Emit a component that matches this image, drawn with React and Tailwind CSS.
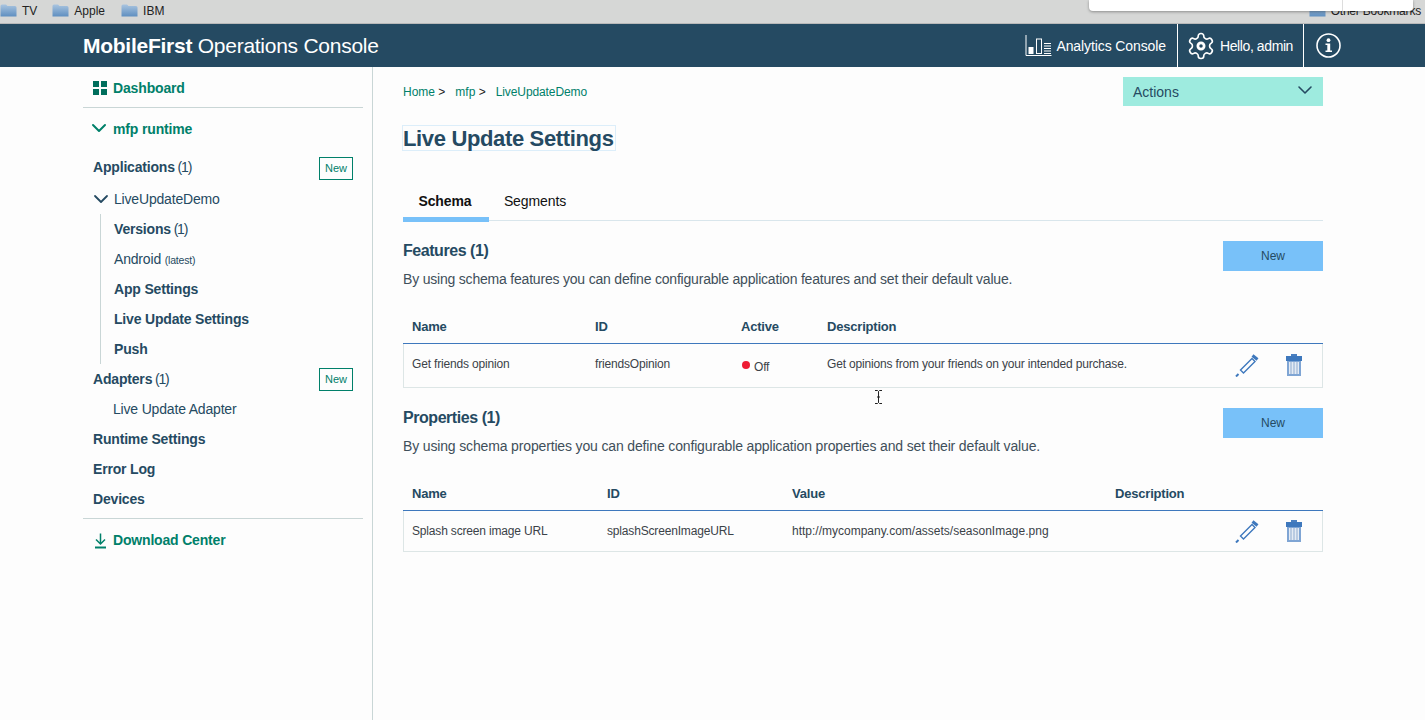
import React from 'react';
import { ChevronDown } from 'lucide-react';

const Folder = () => (
  <svg width="17" height="13" viewBox="0 0 17 13" className="shrink-0">
    <defs>
      <linearGradient id="folderFill" x1="0" y1="0" x2="0" y2="1">
        <stop offset="0" stopColor="#a9c4e0" />
        <stop offset="1" stopColor="#5f8fc0" />
      </linearGradient>
    </defs>
    <path d="M0.5 2 Q0.5 0.5 2 0.5 H6 L7.5 2 H15 Q16.5 2 16.5 3.5 V12.5 H0.5 Z" fill="url(#folderFill)" />
  </svg>
);

const Pencil = () => (
  <svg width="24" height="24" viewBox="0 0 24 24" fill="none" stroke="#3e78bd" strokeWidth="1.4">
    <path d="M5.5 17 L17 5.5 L20 8.5 L8.5 20 Z" />
    <path d="M17.5 2.5 L22.5 6.5" strokeWidth="3" />
    <path d="M1 23.5 L3.5 21" strokeWidth="2" />
  </svg>
);

const Trash = () => (
  <svg width="18" height="23" viewBox="0 0 18 23">
    <rect x="6" y="0" width="6" height="2" fill="#4a7fc0" />
    <rect x="1" y="2" width="16" height="5" fill="#3e78bd" />
    <rect x="2" y="7" width="14" height="15" fill="#7fa5d4" />
    <rect x="4" y="8" width="10" height="12" fill="#e4ebf4" />
    <path d="M6 8 V20 M9 8 V20 M12 8 V20" stroke="#9db6d6" strokeWidth="1.2" />
  </svg>
);

const AnalyticsIcon = () => (
  <svg width="27" height="23" viewBox="0 0 27 23" fill="none" stroke="#fff">
    <path d="M1 1 V21.5 H26.5" />
    <rect x="3.5" y="13" width="5" height="7" fill="#fff" stroke="none" />
    <rect x="11.5" y="5" width="5" height="14.5" />
    <path d="M19 9.5 H26 M19 12 H26 M19 14.5 H26 M19 17 H26 M19 19.5 H26" strokeWidth="1" />
  </svg>
);

const GearIcon = () => (
  <svg width="30" height="30" viewBox="0 0 24 24" fill="none" stroke="#fff" strokeWidth="1.3" strokeLinejoin="round">
    <path d="M12.22 2h-.44a2 2 0 0 0-2 2v.18a2 2 0 0 1-1 1.73l-.43.25a2 2 0 0 1-2 0l-.15-.08a2 2 0 0 0-2.73.73l-.22.38a2 2 0 0 0 .73 2.73l.15.1a2 2 0 0 1 1 1.72v.51a2 2 0 0 1-1 1.74l-.15.09a2 2 0 0 0-.73 2.73l.22.38a2 2 0 0 0 2.73.73l.15-.08a2 2 0 0 1 2 0l.43.25a2 2 0 0 1 1 1.73V20a2 2 0 0 0 2 2h.44a2 2 0 0 0 2-2v-.18a2 2 0 0 1 1-1.73l.43-.25a2 2 0 0 1 2 0l.15.08a2 2 0 0 0 2.73-.73l.22-.39a2 2 0 0 0-.73-2.73l-.15-.08a2 2 0 0 1-1-1.74v-.5a2 2 0 0 1 1-1.74l.15-.09a2 2 0 0 0 .73-2.73l-.22-.38a2 2 0 0 0-2.73-.73l-.15.08a2 2 0 0 1-2 0l-.43-.25a2 2 0 0 1-1-1.73V4a2 2 0 0 0-2-2z" />
    <circle cx="12" cy="12" r="2.5" strokeWidth="2.2" />
  </svg>
);

const InfoIcon = () => (
  <svg width="25" height="25" viewBox="0 0 25 25" fill="none">
    <circle cx="12.5" cy="12.5" r="11.5" stroke="#fff" strokeWidth="1.6" />
    <circle cx="12.5" cy="7.2" r="1.9" fill="#fff" />
    <path d="M9.5 10.5 H14.2 V17.5 H16 V19 H9.5 V17.5 H11.3 V12 H9.5 Z" fill="#fff" />
  </svg>
);

const DownloadIcon = () => (
  <svg width="13" height="16" viewBox="0 0 13 16" fill="none" stroke="#00806a" strokeWidth="1.5">
    <path d="M6.5 0.5 V10.5 M2 6.5 L6.5 11 L11 6.5" />
    <path d="M1 14.5 H12" strokeWidth="2" />
  </svg>
);

const SideNew = () => (
  <span className="w-[34px] h-[23px] border border-[#00806a] text-[#00806a] text-[11px] tracking-normal font-normal flex items-center justify-center">New</span>
);

const Count = () => <span className="tracking-[-1.2px] -ml-[1px]">(1)</span>;

const Row = ({ children, className = '' }) => (
  <div className={`h-[30px] flex items-center text-[14px] tracking-[-0.18px] text-[#254a62] ${className}`}>{children}</div>
);

const SectionHead = ({ title, text, spacing }) => (
  <div className="flex justify-between">
    <div>
      <h3 className="text-[16px] leading-[20px] tracking-[-0.45px] font-bold text-[#254a62]">{title}</h3>
      <p className={`mt-[8px] text-[14px] leading-[20px] text-[#3f4f5a] ${spacing}`}>{text}</p>
    </div>
    <button className="w-[100px] h-[30px] bg-[#78c1f9] text-[12px] text-[#254a62] flex items-center justify-center">New</button>
  </div>
);

const Actions = () => (
  <div className="flex items-center w-[94px] shrink-0 ml-auto">
    <span className="w-[24px] ml-[7px]"><Pencil /></span>
    <span className="ml-[26px] mt-[1px]"><Trash /></span>
  </div>
);

export default function App() {
  return (
    <div className="min-h-[720px] bg-[#fdfdfd] font-['Liberation_Sans',Arial,sans-serif] flex flex-col relative overflow-hidden">
      {/* browser bookmarks bar */}
      <div className="h-[24px] bg-[#d6d7d6] border-b border-[#b9b9b9] flex items-center pb-[2px] text-[12px] text-[#222]">
        <span className="flex items-center gap-[5px]"><Folder /><span>TV</span></span>
        <span className="flex items-center gap-[5px] ml-[15px]"><Folder /><span>Apple</span></span>
        <span className="flex items-center gap-[5px] ml-[16px]"><Folder /><span>IBM</span></span>
        <span className="flex items-center gap-[5px] ml-auto mr-[4px] tracking-[-0.2px]"><Folder /><span className="whitespace-nowrap">Other Bookmarks</span></span>
      </div>
      <div className="absolute left-[1089px] top-0 w-[324px] h-[11px] bg-white rounded-b-[4px] shadow-[0_1px_3px_rgba(0,0,0,0.35)]">
        <div className="w-[254px] h-full border-r border-[#dddddd]" />
      </div>

      {/* console header */}
      <header className="h-[43px] bg-[#254a62] flex items-center pl-[83px] text-white">
        <div className="text-[21px] tracking-[-0.26px]"><span className="font-bold">MobileFirst</span> Operations Console</div>
        <div className="ml-auto h-full flex items-center text-[14px]">
          <div className="flex items-center gap-[4px] pr-[11px] h-full border-r border-white tracking-[-0.1px]">
            <AnalyticsIcon />
            <span className="pt-[2px]">Analytics Console</span>
          </div>
          <div className="flex items-center gap-[4px] pl-[8px] pr-[10px] h-full border-r border-white tracking-[-0.4px]">
            <GearIcon />
            <span className="pt-[2px]">Hello, admin</span>
          </div>
          <div className="w-[121px] pl-[12px] flex items-center">
            <InfoIcon />
          </div>
        </div>
      </header>

      <div className="flex flex-1">
        {/* sidebar */}
        <aside className="w-[373px] shrink-0 border-r border-[#c9d6d6] pl-[83px] pr-[9px]">
          <div className="h-[41px] border-b border-[#c9d6d6] flex items-center pt-[2px] pl-[10px] gap-[6px] text-[14px] tracking-[-0.15px] font-bold text-[#00806a]">
            <span className="grid grid-cols-2 gap-[1.5px] w-[14px] h-[14px]">
              <i className="bg-[#006e5c]" /><i className="bg-[#006e5c]" /><i className="bg-[#006e5c]" /><i className="bg-[#006e5c]" />
            </span>
            Dashboard
          </div>
          <div className="pl-[10px] pr-[10px]">
            <div className="h-[42px] flex items-center gap-[8px] text-[14px] tracking-[-0.15px] font-bold text-[#00806a]">
              <ChevronDown size={24} strokeWidth={2} className="-mx-[6px] -mt-[2px]" />
              mfp runtime
            </div>
            <div className="h-[34px] flex items-center justify-between text-[14px] tracking-[-0.18px] text-[#254a62]">
              <span><b>Applications</b> <Count /></span>
              <span className="mt-[3px]"><SideNew /></span>
            </div>
            <Row className="gap-[7px]">
              <ChevronDown size={24} strokeWidth={1.8} className="-ml-[4px] -mr-[6px]" />
              LiveUpdateDemo
            </Row>
            <div className="ml-[7px] pl-[13px] border-l border-[#c9d6d6]">
              <Row><span><b>Versions</b> <Count /></span></Row>
              <Row><span>Android <span className="text-[10.5px]">(latest)</span></span></Row>
              <Row className="font-bold">App Settings</Row>
              <Row className="font-bold">Live Update Settings</Row>
              <Row className="font-bold">Push</Row>
            </div>
            <Row className="justify-between">
              <span><b>Adapters</b> <Count /></span>
              <SideNew />
            </Row>
            <Row className="pl-[20px]">Live Update Adapter</Row>
            <Row className="font-bold">Runtime Settings</Row>
            <Row className="font-bold">Error Log</Row>
            <Row className="font-bold">Devices</Row>
          </div>
          <div className="mt-[4px] h-[42px] border-t border-[#c9d6d6] flex items-center pt-[2px] pl-[11px] gap-[6px] text-[14px] tracking-[-0.18px] font-bold text-[#00806a]">
            <DownloadIcon />
            Download Center
          </div>
        </aside>

        {/* main content */}
        <main className="flex-1 pl-[30px] pr-[102px] pt-[10px]">
          <div className="flex justify-between">
            <div className="text-[12px] text-[#222] pt-[8px] leading-[14px]">
              <span className="text-[#00806a]">Home</span> &gt;
              <span className="text-[#00806a] ml-[10px]">mfp</span> &gt;
              <span className="text-[#00806a] ml-[10px] tracking-[-0.1px]">LiveUpdateDemo</span>
            </div>
            <div className="w-[200px] h-[29px] bg-[#9eebdf] flex items-center justify-between pl-[10px] pr-[12px] pt-[1px] text-[14px] text-[#254a62]">
              Actions
              <ChevronDown size={24} strokeWidth={1.6} className="-mx-[6px] -mt-[4px]" />
            </div>
          </div>

          <h1 className="mt-[19px] -ml-px pr-px pt-px w-fit border border-[#dceefa] text-[22px] leading-[23px] tracking-[-0.35px] font-bold text-[#254a62]">Live Update Settings</h1>

          <div className="mt-[35px] flex border-b border-[#d9e6ec] h-[35px] text-[14px] text-[#111]">
            <div className="w-[86px] h-[36px] border-b-[5px] border-[#78c1f9] font-bold tracking-[-0.1px] flex items-center justify-center pr-[2px]">Schema</div>
            <div className="w-[92px] tracking-[-0.1px] flex items-center justify-center pb-[4px]">Segments</div>
          </div>

          <section className="mt-[20px]">
            <SectionHead title="Features (1)" spacing="tracking-[-0.2px]" text="By using schema features you can define configurable application features and set their default value." />
            <div className="mt-[23px] h-[32px] flex items-center pl-[9px] pb-[2px] text-[13px] tracking-[-0.2px] font-bold text-[#254a62] border-b border-[#3e78bd]">
              <span className="w-[183px]">Name</span>
              <span className="w-[146px]">ID</span>
              <span className="w-[86px]">Active</span>
              <span>Description</span>
            </div>
            <div className="h-[44px] flex items-center pl-[8px] pb-[2px] text-[12px] tracking-[-0.17px] text-[#3b4248] border-x border-b border-[#dde6e6]">
              <span className="w-[183px] -mt-[2px]">Get friends opinion</span>
              <span className="w-[146px] -mt-[2px]">friendsOpinion</span>
              <span className="w-[86px] flex items-center gap-[4px] pl-px">
                <i className="w-[8px] h-[8px] rounded-full bg-[#ee1c34]" />
                <span className="mt-[4px]">Off</span>
              </span>
              <span className="-mt-[2px]">Get opinions from your friends on your intended purchase.</span>
              <Actions />
            </div>
          </section>

          <section className="mt-[20px]">
            <SectionHead title="Properties (1)" spacing="tracking-[-0.15px]" text="By using schema properties you can define configurable application properties and set their default value." />
            <div className="mt-[23px] h-[32px] flex items-center pl-[9px] pb-[2px] text-[13px] tracking-[-0.2px] font-bold text-[#254a62] border-b border-[#3e78bd]">
              <span className="w-[195px]">Name</span>
              <span className="w-[185px]">ID</span>
              <span className="w-[323px]">Value</span>
              <span>Description</span>
            </div>
            <div className="h-[41px] flex items-center pl-[8px] text-[12px] tracking-[-0.17px] text-[#3b4248] border-x border-b border-[#dde6e6]">
              <span className="w-[195px]">Splash screen image URL</span>
              <span className="w-[185px]">splashScreenImageURL</span>
              <span className="tracking-normal">http://mycompany.com/assets/seasonImage.png</span>
              <Actions />
            </div>
          </section>
        </main>
      </div>

      {/* text cursor caught in the capture */}
      <svg width="7" height="14" viewBox="0 0 7 14" className="absolute left-[875px] top-[390px]" fill="none" stroke="#222">
        <path d="M0 0.5 H2.5 L3.5 1.5 L4.5 0.5 H7 M3.5 1.5 V12.5 M0 13.5 H2.5 L3.5 12.5 L4.5 13.5 H7 M2 7 H5" />
      </svg>
    </div>
  );
}
